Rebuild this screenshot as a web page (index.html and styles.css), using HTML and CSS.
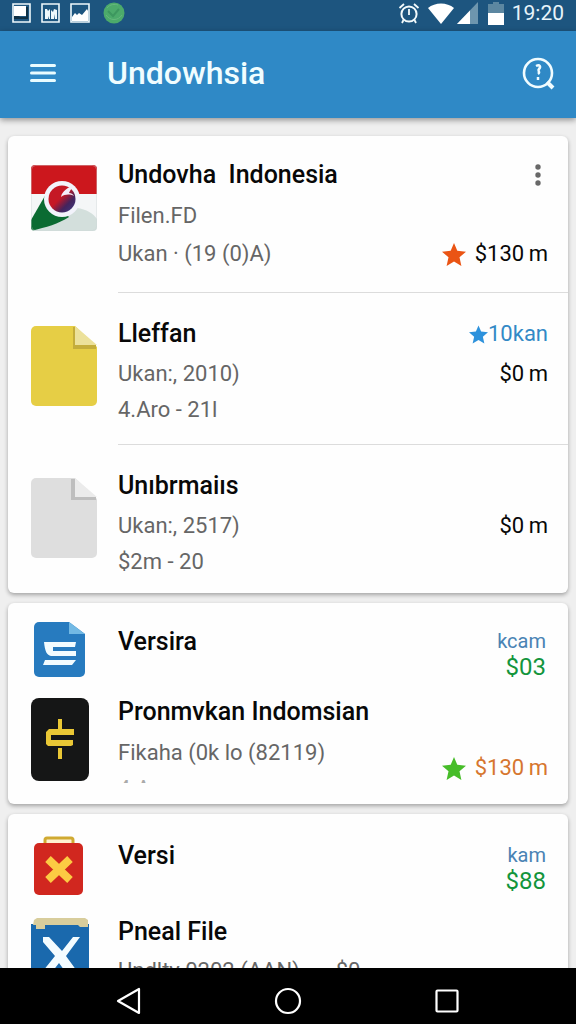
FILE: index.html
```html
<!DOCTYPE html>
<html lang="id">
<head>
<meta charset="utf-8">
<meta name="viewport" content="width=device-width, initial-scale=1">
<title>Undowhsia</title>
<link rel="stylesheet" href="styles.css">
</head>
<body>
<div class="statusbar">
  <div class="status-left">
    <svg width="19" height="20" viewBox="0 0 19 20"><path fill="none" stroke="#eef8fc" stroke-width="1.6" d="M1 1h17v18H1z"/><path fill="#fff" d="M2 3h12v10H2z"/><path fill="#0e3045" d="M2 13h5l1 1h6V4h2v12H2z"/></svg>
    <svg width="19" height="20" viewBox="0 0 19 20"><path fill="none" stroke="#eef8fc" stroke-width="1.6" d="M1 1h17v18H1z"/><path fill="#eef8fc" d="M4 6h2l1 2 2-2v10H8v-3l-1 3H4zM10 7l2 2 1-3 3 1v9h-2v-5l-1 5h-3z"/></svg>
    <svg width="20" height="20" viewBox="0 0 20 20"><path fill="none" stroke="#eef8fc" stroke-width="1.6" d="M1 1h18v18H1z"/><path fill="#fff" d="M2 18v-4l3-4 2 2 2-2 3 2 5-6 1 2v10z"/></svg>
    <svg class="status-dot" width="22" height="22" viewBox="0 0 22 22"><circle cx="11" cy="11" r="10.5" fill="#4caa6b"/><path fill="none" stroke="#3d975f" stroke-width="2" d="M5 9l5 5 6-7"/><path fill="none" stroke="#66b87c" d="M3 13c4 6 12 6 16 0M4 6c3-4 8-4 11-3"/></svg>
  </div>
  <div class="status-right">
    <svg width="22" height="22" viewBox="0 0 22 22" fill="none" stroke="#f2fafc"><circle cx="11" cy="12" r="7.6" stroke-width="2"/><path stroke-width="1.8" d="M11 7v6M1.500 6L6 2M20.500 6L16 2M5.500 18L4 21M16.500 18l1.500 3"/></svg>
    <svg class="wifi" width="26" height="21" viewBox="0 0 26 21"><path fill="#fff" d="M0 5C7-1 19-1 26 5L13 21z"/></svg>
    <svg class="signal" width="21" height="22" viewBox="0 0 21 22"><path fill="#6e96ae" d="M21 0v22H0z"/><path fill="#fff" d="M13 8.500V22H0z"/></svg>
    <svg class="battery" width="16" height="23" viewBox="0 0 16 23"><path fill="#5c87a1" d="M5 0h6v2h5v10H0V2h5z"/><path fill="#fff" d="M0 11h16v12H0z"/></svg>
    <span class="clock">19:20</span>
  </div>
</div>
<header class="appbar">
  <button class="icon-button" aria-label="Menu"><svg width="26" height="20" viewBox="0 0 26 20"><path stroke="#e9fcff" stroke-width="3" stroke-linecap="round" d="M1.500 2.500h23M1.500 10h23M1.500 17.500h23"/></svg></button>
  <h1 class="app-title">Undowhsia</h1>
  <button class="icon-button" aria-label="Search"><svg width="33" height="33" viewBox="0 0 33 33" fill="none" stroke="#f0fcff"><circle cx="16" cy="16" r="14" stroke-width="2.600"/><path stroke-width="4" d="M25 25l6 6"/><path stroke-width="2.500" d="M14 9c4-2 5 1 3 3s2 3-1 5M16 20v3"/></svg></button>
</header>
<main class="content">
  <section class="card">
    <article class="row row-spaced">
      <div class="thumb"><svg width="66" height="66" viewBox="0 0 66 66"><defs><clipPath id="flag"><rect width="66" height="66" rx="4"/></clipPath><linearGradient id="ball" x1="0" y1="0" x2="1" y2="1"><stop offset=".45" stop-color="#c51825"/><stop offset=".7" stop-color="#44245d"/><stop offset="1" stop-color="#3b3a86"/></linearGradient></defs><g clip-path="url(#flag)"><path fill="#f4f6f7" d="M0 0h66v66H0z"/><path fill="#cc171d" d="M0 0h66v29H0z"/><path fill="#d3dfdc" d="M0 66c18-5 31-14 46-23 9 1 17 6 20 11v12z"/><path fill="#0b6b32" d="M15 29L0 55v11c16-4 27-7 38-14z"/></g><circle cx="31" cy="34" r="18" fill="#f2f3fb"/><circle cx="31" cy="34" r="13.500" fill="url(#ball)"/><path fill="#f4effa" d="M43 21c-6 1-12 5-13 11 4-3 9-3 13-1-1-2-3-3-5-3 1-3 3-5 5-7z"/><rect x=".5" y=".5" width="65" height="65" rx="4" fill="none" stroke="#d0d6d7" stroke-opacity=".4"/></svg></div>
      <div class="body">
        <div class="line title-line"><h2 class="title">Undovha&nbsp; Indonesia</h2><button class="more" aria-label="More"><svg width="6" height="22" viewBox="0 0 6 22" fill="#686868"><circle cx="3" cy="3" r="2.700"/><circle cx="3" cy="11" r="2.700"/><circle cx="3" cy="19" r="2.700"/></svg></button></div>
        <div class="line"><span class="sub">Filen.FD</span></div>
        <div class="line"><span class="sub">Ukan · (19 (0)A)</span><span class="price"><svg class="star" width="24" height="23" viewBox="0 0 24 23"><path fill="#ea5414" d="M12 0l3.300 7.800L24 8.700l-6.500 5.600L19.400 23 12 18.500 4.600 23l1.900-8.700L0 8.700l8.700-.9z"/></svg>$130&thinsp;m</span></div>
      </div>
    </article>
    <article class="row">
      <div class="thumb thumb-page"><svg width="66" height="80" viewBox="0 0 66 80"><path fill="#e6ce45" d="M5 0h39l22 21v54a5 5 0 0 1-5 5H5a5 5 0 0 1-5-5V5a5 5 0 0 1 5-5z"/><path fill="#c4ad3b" d="M42 1h3v18h20v4H42z"/><path fill="#ece19a" d="M44 0l22 19H44z"/></svg></div>
      <div class="body">
        <div class="line title-line"><h2 class="title">Lleffan</h2><span class="tag tag-large"><svg width="19" height="19" viewBox="0 0 24 23"><path fill="#2e92dc" d="M12 0l3.300 7.800L24 8.700l-6.500 5.600L19.400 23 12 18.500 4.600 23l1.900-8.700L0 8.700l8.700-.9z"/></svg>10kan</span></div>
        <div class="line"><span class="sub">Ukan:, 2010)</span><span class="price">$0&thinsp;m</span></div>
        <div class="line"><span class="sub">4.Aro - 21l</span></div>
      </div>
    </article>
    <article class="row row-end">
      <div class="thumb thumb-page"><svg width="66" height="80" viewBox="0 0 66 80"><path fill="#dedede" d="M5 0h39l22 21v54a5 5 0 0 1-5 5H5a5 5 0 0 1-5-5V5a5 5 0 0 1 5-5z"/><path fill="#bebebe" d="M40 1h4v18h21v3H40z"/><path fill="#ebebeb" d="M44 0l22 19H44z"/></svg></div>
      <div class="body">
        <div class="line title-line"><h2 class="title">Unıbrmaiıs</h2></div>
        <div class="line"><span class="sub">Ukan:, 2517)</span><span class="price">$0&thinsp;m</span></div>
        <div class="line"><span class="sub">$2m - 20</span></div>
      </div>
    </article>
  </section>
  <section class="card">
    <article class="row row-short">
      <div class="thumb thumb-small"><svg width="51" height="55" viewBox="0 0 51 55"><path fill="#277bbf" d="M5 0h30l16 12v38a5 5 0 0 1-5 5H5a5 5 0 0 1-5-5V5a5 5 0 0 1 5-5z"/><path fill="#72b9e4" d="M35 0l16 12H35z"/><path fill="#f2fcff" d="M10 20h32l-1 5H19v4h23v5H17c-4-1-6-4-7-14zM11 38h31l-4 5H9z"/></svg></div>
      <div class="body columns"><h2 class="title">Versira</h2><div class="stack"><span class="tag">kcam</span><span class="amount">$03</span></div></div>
    </article>
    <article class="row row-tall">
      <div class="thumb thumb-dark"><svg width="58" height="83" viewBox="0 0 58 83"><rect width="58" height="83" rx="8" fill="#151616"/><path fill="#e9c735" d="M27 21h4v10h12v6H20v5h22v5l-2 1H17l-2-2V34l3-3h9zM27 50h4v11h-4z"/></svg></div>
      <div class="body columns"><div class="text"><h2 class="title">Pronmvkan Indomsian</h2><div class="sub sub-loose">Fikaha (0k lo (82119)</div><div class="sub sub-cut">4.Am</div></div><span class="price price-end"><svg class="star" width="24" height="23" viewBox="0 0 24 23"><path fill="#47bd29" d="M12 0l3.300 7.800L24 8.700l-6.500 5.600L19.400 23 12 18.500 4.600 23l1.900-8.700L0 8.700l8.700-.9z"/></svg><span class="orange">$130&thinsp;m</span></span></div>
    </article>
  </section>
  <section class="card card-last">
    <article class="row row-short">
      <div class="thumb thumb-small"><svg width="49" height="59" viewBox="0 0 49 59"><path fill="#fff3d0" stroke="#d0aa32" stroke-width="3" d="M11 10V4a2 2 0 0 1 2-2h24a2 2 0 0 1 2 2v6z"/><rect y="7" width="49" height="52" rx="5" fill="#d1271f"/><path stroke="#fccb43" stroke-width="8" d="M14 23l22 21M36 23L14 44"/></svg></div>
      <div class="body columns"><h2 class="title">Versi</h2><div class="stack"><span class="tag">kam</span><span class="amount">$88</span></div></div>
    </article>
    <article class="row row-tall">
      <div class="thumb thumb-dark"><svg width="58" height="74" viewBox="0 0 58 74"><path fill="#1a69ad" d="M0 6h58v68H0z"/><path fill="#d8cd9c" d="M3 2l3-2h48l3 2v7h-8l-2-2H14v4H5V7H2z"/><path fill="#f3fcff" d="M12 19h6l13 14 11-14h7L35 38l16 22H39L28 45 18 58H8l16-20-12-14z"/></svg></div>
      <div class="body"><h2 class="title">Pneal File</h2><div class="line line-inline"><span class="sub">Undlty 0202 (AAN)</span><span class="sub">$0</span></div></div>
    </article>
  </section>
</main>
<nav class="navbar">
  <button class="nav-button" aria-label="Back"><svg width="26" height="28" viewBox="0 0 26 28"><path fill="none" stroke="#fff" stroke-width="2.200" stroke-linejoin="round" d="M23 2v24L2 14z"/></svg></button>
  <button class="nav-button" aria-label="Home"><svg width="28" height="28" viewBox="0 0 28 28"><circle cx="14" cy="14" r="12" fill="none" stroke="#fff" stroke-width="2.200"/></svg></button>
  <button class="nav-button" aria-label="Recent apps"><svg width="26" height="26" viewBox="0 0 26 26"><rect x="2.500" y="2.500" width="21" height="21" rx="1" fill="none" stroke="#fff" stroke-width="2.200"/></svg></button>
</nav>
</body>
</html>
```

FILE: styles.css
```css
* { box-sizing: border-box; }
body {
  margin: 0;
  height: 100vh;
  display: flex;
  flex-direction: column;
  overflow: hidden;
  background: #efefef;
  color: #080808;
  font-family: Roboto, "Liberation Sans", sans-serif;
}
h1, h2 { margin: 0; font-weight: 500; }
button { border: 0; padding: 0; background: none; display: flex; align-items: center; justify-content: center; }
svg { display: block; flex: none; }

.statusbar {
  flex: none;
  height: 31px;
  padding: 0 12px;
  display: flex;
  justify-content: space-between;
  background: #1d557f;
}
.status-left, .status-right { display: flex; height: 26px; align-items: center; }
.status-left { gap: 10px; }
.status-dot { margin-left: 3px; }
.wifi { margin-left: 8px; }
.signal { margin-left: 3px; }
.battery { margin: 0 8px 0 10px; }
.clock { font-size: 21px; line-height: 26px; color: #e8f4fa; }

.appbar {
  flex: none;
  height: 87px;
  padding: 0 21px 3px 30px;
  display: flex;
  align-items: center;
  background: #2f89c6;
  box-shadow: 0 2px 6px rgba(0, 0, 0, .4);
  z-index: 1;
}
.app-title { flex: 1; padding-left: 51px; font-size: 32px; line-height: 44px; color: #f0fdff; }

.content {
  flex: 1;
  min-height: 0;
  overflow: hidden;
  padding: 18px 8px 0;
  display: flex;
  flex-direction: column;
  gap: 10px;
}
.card {
  flex: none;
  border-radius: 6px;
  background: #fefefe;
  box-shadow: 0 2px 4px rgba(0, 0, 0, .32);
}
.row { display: grid; grid-template-columns: 110px 1fr; }
.thumb { padding: 29px 0 0 23px; }
.thumb-page { padding-top: 33px; }
.thumb-small { padding: 19px 0 0 26px; }
.thumb-dark { padding-top: 7px; }
.body { padding: 19px 20px 16px 0; min-width: 0; }
.row-spaced .body { padding: 17px 20px 19px 0; }
.row-end .body { padding-bottom: 13px; }
.row:not(:last-child) .body:not(.columns) { border-bottom: 1px solid #dcdcdc; }
.line { display: flex; justify-content: space-between; align-items: center; height: 36px; }
.row-spaced .line { height: 38px; }
.row .title-line { height: 44px; }
.title { font-size: 25px; line-height: 42px; white-space: nowrap; }
.sub { font-size: 22px; line-height: 36px; color: #666; white-space: nowrap; }
.price { display: flex; align-items: center; gap: 9px; font-size: 22px; line-height: 30px; white-space: nowrap; }
.more { width: 20px; height: 36px; }
.tag { display: flex; align-items: center; font-size: 20px; line-height: 26px; color: #4a83b4; }
.tag-large { font-size: 22px; color: #3289c6; }
.amount { font-size: 24px; line-height: 26px; color: #13953c; }
.orange { color: #d6762f; }

.columns { display: flex; justify-content: space-between; }
.row-short .body { padding: 18px 22px 0 0; min-height: 88px; }
.stack { display: flex; flex-direction: column; align-items: flex-end; padding-top: 7px; }
.row + .row-tall .body { padding: 0 20px 21px 0; }
.sub-loose { line-height: 40px; }
.sub-cut { height: 10px; line-height: 32px; overflow: hidden; color: #aaa; }
.price-end { align-self: flex-end; }
.card-last { padding-top: 3px; }
.card-last .row-short .body { min-height: 94px; }
.line-inline { justify-content: flex-start; gap: 36px; }

.navbar {
  flex: none;
  height: 56px;
  padding: 10px 50px 0;
  display: flex;
  justify-content: space-around;
  align-items: flex-start;
  background: #000;
  z-index: 1;
}
.nav-button { width: 46px; height: 46px; }
```
